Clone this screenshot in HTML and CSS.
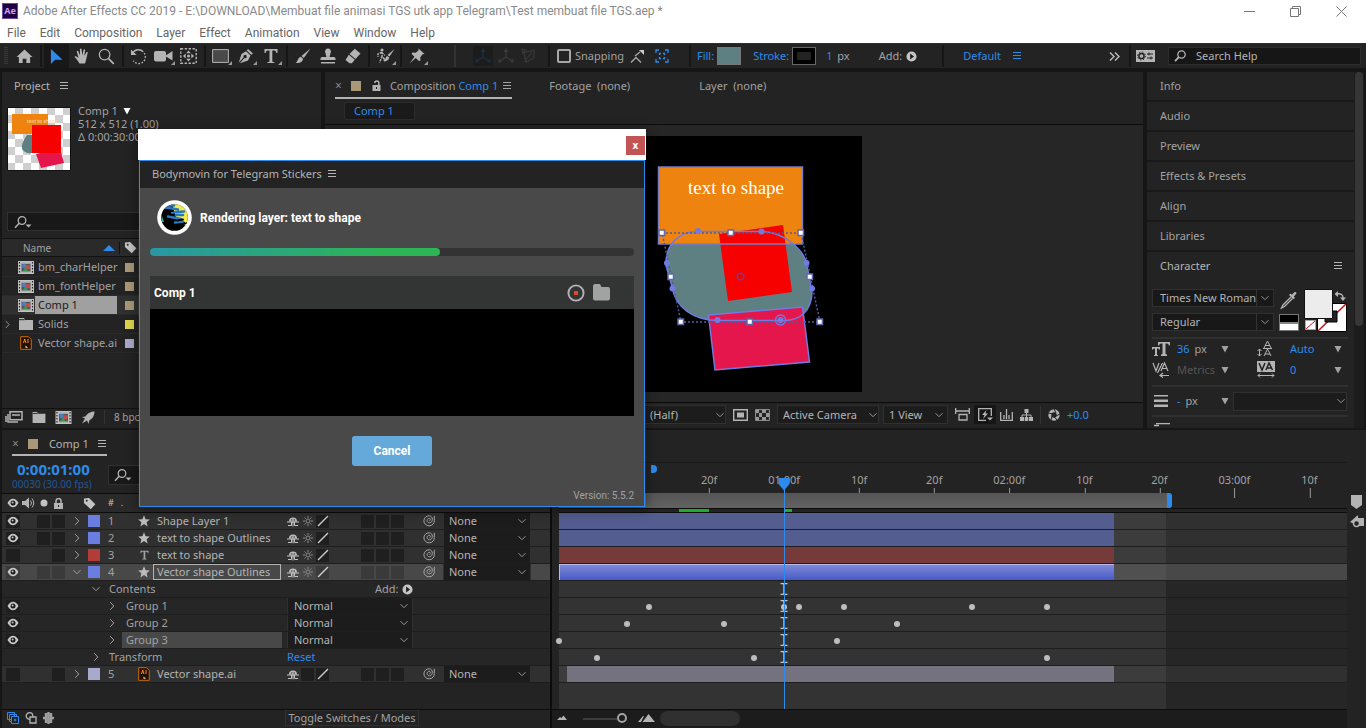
FILE: index.html
```html
<!DOCTYPE html>
<html lang="en">
<head>
<meta charset="utf-8">
<title>Adobe After Effects CC 2019</title>
<link rel="stylesheet" href="styles.css">
</head>
<body>
<svg class="defs" aria-hidden="true">
  <symbol id="i-menu" viewBox="0 0 10 10"><path d="M1 1.500h8M1 4.500h8M1 7.500h8" stroke="currentColor" fill="none"/></symbol>
  <symbol id="i-down" viewBox="0 0 10 10"><path d="M1.500 3.200 5 6.700l3.500-3.500" stroke="currentColor" fill="none"/></symbol>
  <symbol id="i-right" viewBox="0 0 10 10"><path d="M3.200 1.200 6.800 5 3.200 8.800" stroke="currentColor" fill="none"/></symbol>
  <symbol id="i-tri" viewBox="0 0 8 8"><path d="M.500 1h7L4 7.500z" fill="currentColor"/></symbol>
  <symbol id="i-search" viewBox="0 0 18 14"><circle cx="8" cy="5.500" r="3.800" fill="none" stroke="currentColor" stroke-width="1.300"/><path d="M5.200 8.300 1 12.800" stroke="currentColor" stroke-width="1.500"/><path d="M11.500 9.500h6l-3 3z" fill="currentColor"/></symbol>
  <symbol id="i-lens" viewBox="0 0 12 12"><circle cx="7.500" cy="4.500" r="3.700" fill="none" stroke="currentColor" stroke-width="1.300"/><path d="M4.800 7.200 1 11.200" stroke="currentColor" stroke-width="1.800"/></symbol>
  <symbol id="i-play" viewBox="0 0 12 12"><circle cx="6" cy="6" r="5.500" fill="#c4c4c4"/><path d="M4.500 2.800 8.800 6 4.500 9.200z" fill="#1e1e1e"/></symbol>
  <symbol id="i-tag" viewBox="0 0 14 14"><path d="M1 1.500 6.500 1l6.800 6.800-5 5.400L1 6.500z" fill="currentColor"/><circle cx="4" cy="4" r="1.100" fill="#2c2c2c"/></symbol>
  <symbol id="i-comp" viewBox="0 0 16 13"><path fill="#c2c2c2" d="M0 0h16v13H0z"/><path d="M1.500 1v11M14.500 1v11" stroke="#222" stroke-width="1.200" stroke-dasharray="1.600 1.400"/><path fill="#555" d="M3.500 1.800h9v9.400h-9z"/><path fill="#c2c2c2" d="M3.500 1.800h9v1h-9zM3.500 10.500h9v.700h-9z"/><circle cx="6.200" cy="5" r="2.200" fill="#4a7fc9"/><path fill="#c94a4a" d="M8 4.200h4v4H8z"/><path fill="#2f9a55" d="m7.500 6 2.500 4H5z"/></symbol>
  <symbol id="i-folder" viewBox="0 0 14 12"><path fill="#b4b4b4" d="M0 0h5l1 2h8v10H0z"/><path stroke="#262626" d="M0 1.700h5.500"/></symbol>
  <symbol id="i-ai" viewBox="0 0 12 14"><path d="M.700.700h7.800l2.800 2.800v9.800H.700z" fill="#241000" stroke="#c96a10"/><path d="m3.500 7 1.200-4L6 7M8 3v4" stroke="#ff8c1a" fill="none"/><path fill="#eee" d="M5.500 9.500 8 11.800H5.500z"/></symbol>
  <symbol id="i-eye" viewBox="0 0 12 10"><path d="M.500 5Q3 .8 6 .8T11.500 5Q9 9.200 6 9.200T.500 5z" fill="#c8c8c8"/><circle cx="6" cy="5" r="2.500" fill="#1c1c1c"/><circle cx="5.600" cy="4.600" r="1" fill="#c4c4c4"/></symbol>
  <symbol id="i-star" viewBox="0 0 12 12"><path d="m6 .3 1.600 3.900 4.200.3-3.200 2.700 1 4.200L6 9.100l-3.600 2.300 1-4.200L.200 4.500l4.200-.3z" fill="#bdbdbd"/></symbol>
  <symbol id="i-shy" viewBox="0 0 12 11"><path d="M2 5.500a4 4 0 0 1 8 0z" fill="#bdbdbd"/><path d="M0 6h12M6 5v5.500M1 9.500h3.500V6M11 9.500H7.500V6" stroke="#c4c4c4" fill="none"/><path d="M4 4h1.500M6.500 4H8" stroke="#303030"/></symbol>
  <symbol id="i-sun" viewBox="0 0 12 12"><circle cx="6" cy="6" r="2" fill="none" stroke="#8c8c8c"/><path d="M6 1v2M6 9v2M1 6h2M9 6h2M2.500 2.500l1.300 1.300M8.200 8.200l1.300 1.300M9.500 2.500 8.200 3.800M3.800 8.200 2.500 9.500" stroke="#8c8c8c"/></symbol>
  <symbol id="i-slash" viewBox="0 0 12 12"><path d="M1 11 11 1" stroke="#ccc" stroke-width="1.400"/></symbol>
  <symbol id="i-spiral" viewBox="0 0 12 12"><path d="M11.300.800v4.700a5.200 5 0 1 1-5-4.700c4 0 4 6.800.300 7-3.500 0-3-4.500-.4-4.500 1.700.2 1.500 2.300.3 2.300" fill="none" stroke="#a8a8a8"/></symbol>
  <symbol id="i-ibeam" viewBox="0 0 8 12"><path d="M.500.500h2.500l1 1 1-1h2.500M.500 11.500H3l1-1 1 1h2.500M4 1.500v9" fill="none" stroke="#c4c4c4" stroke-width="1.400"/></symbol>
  <symbol id="i-home" viewBox="0 0 18 16"><path d="M9 .5.500 8.500H3V15h4v-4.500h4V15h4V8.500h2.500z" fill="currentColor"/></symbol>
  <symbol id="i-arrow" viewBox="0 0 14 18"><path d="M1 1v16l4.500-4.500h8z" fill="#2d8ceb"/></symbol>
  <symbol id="i-hand" viewBox="0 0 16 16"><path d="M5.500 15.500C4 13 2.500 11 .800 9.300c-.5-.8.8-1.500 1.700-.8l2 1.600L2.800 3.600c0-1 1.200-1.100 1.600-.2L6 7.500 5.900 1.300c.2-1 1.500-1 1.700 0L8.300 7.300l1.300-5.500c.4-.9 1.500-.6 1.500.3l-.7 6 2-3.800c.6-.8 1.600-.3 1.300.6-1.200 4-1.300 6.600-2.700 10.600z" fill="currentColor"/></symbol>
  <symbol id="i-zoom" viewBox="0 0 18 18"><circle cx="7" cy="7" r="5.600" fill="none" stroke="currentColor" stroke-width="1.300"/><path d="m11.200 11.200 5.500 5.500" stroke="currentColor" stroke-width="1.900"/></symbol>
  <symbol id="i-rot" viewBox="0 0 18 18"><path d="M2.500 6A7 7 0 0 1 14 4" fill="none" stroke="currentColor" stroke-width="1.500"/><path d="M15 5.500A7 7 0 1 1 3.500 13.500" fill="none" stroke="currentColor" stroke-width="1.500" stroke-dasharray="1.700 1.700"/><path d="M1 1.500v6h6z" fill="currentColor"/></symbol>
  <symbol id="i-cam" viewBox="0 0 19 12"><rect y="1" width="12" height="10.500" rx="2" fill="currentColor"/><path d="m11 6 7.500-5v9.500z" fill="currentColor"/></symbol>
  <symbol id="i-pan" viewBox="0 0 17 16"><rect x=".8" y=".8" width="15.400" height="14.400" fill="none" stroke="currentColor" stroke-width="1.400" stroke-dasharray="2.400 1.500"/><path d="m8.500 2.500 2.300 2.800H6.200zM8.500 13.500l2.300-2.800H6.200zM3 8l2.700-2.400v4.800zM14 8l-2.700-2.400v4.800z" fill="currentColor"/><circle cx="8.500" cy="8" r="1.500" fill="currentColor"/></symbol>
  <symbol id="i-rect" viewBox="0 0 17 14"><path d="M.600.600h15.800v12.800H.600z" fill="#4a4a4a" stroke="currentColor"/></symbol>
  <symbol id="i-pen" viewBox="0 0 16 16"><path d="m10 1 5 4.500-1.800 1.300L8.800 2.500zM8 3.200 12.500 7.500 10 12.500 1.800 15.200 6.500 10A1.600 1.600 0 1 0 5.700 9.300L.800 14.500 3.500 6z" fill="currentColor"/></symbol>
  <symbol id="i-text" viewBox="0 0 14 16"><path d="M.5 1h13v4h-1.200c-.3-1.600-.8-2.400-2.300-2.400H8.300v10.300c0 .9.500 1.100 2 1.200V15H3.500v-.9c1.500-.1 2-.3 2-1.200V2.600H4C2.500 2.600 2 3.400 1.700 5H.500z" fill="currentColor"/></symbol>
  <symbol id="i-brush" viewBox="0 0 16 16"><path d="M15.500.500 8.800 10 6.500 8zM5.800 8.700l2.300 2C7.700 14.500 3.500 15.500.500 15c2.500-1 2-5.600 5.300-6.300z" fill="currentColor"/></symbol>
  <symbol id="i-stamp" viewBox="0 0 16 16"><path d="M8 .5a3 3 0 0 1 2.700 4.300L9.500 9H14q1.500 0 1.500 1.500V12H.500v-1.500Q.500 9 2 9h4.500L5.300 4.800A3 3 0 0 1 8 .5zM1 14h14v1.500H1z" fill="currentColor"/></symbol>
  <symbol id="i-eraser" viewBox="0 0 16 16"><path d="m9.800.8 5.700 4.700-5 5.500-6-5zM3.800 6.800l6 5-3 3.500H4.500L.500 12z" fill="currentColor"/></symbol>
  <symbol id="i-roto" viewBox="0 0 20 16"><circle cx="7" cy="2" r="1.600" fill="currentColor"/><path d="M6.500 4.500 3 6v3M7 4v5l3 2M7 8.500l-2.500 6M7 5l3 2.500M9 11l1 3" stroke="currentColor" stroke-width="1.500" stroke-dasharray="2 1" fill="none"/><path d="m19.500 1-5 7.500-2-1.500zM12.200 8l2 1.600c-.5 3.200-3 4-5.500 3.600 2-1 1.500-4.500 3.500-5.200z" fill="currentColor"/></symbol>
  <symbol id="i-pin" viewBox="0 0 16 16"><path d="M9.500.500 15.500 6l-2 .3-2.300 3.200.3 3-1.500.5L6.800 9.900.500 15.500l5-6.800L2.500 5.800l1-1.300 3.300.2 2.700-2.500z" fill="currentColor"/></symbol>
  <symbol id="i-axes" viewBox="0 0 18 16"><path d="M9 9V2M9 9l-6 4M9 9l6 4" stroke="currentColor" stroke-width="1.300" fill="none"/><path d="m9 0 2.500 4h-5zM1 14.500l1-4 3 3.500zM17 14.500l-1-4-3 3.500z" fill="currentColor"/></symbol>
  <symbol id="i-plane" viewBox="0 0 16 16"><path d="m3 5 10-3v8L5 14zM3 14l8-10M1 1l4 1-3 3z" fill="none" stroke="currentColor" stroke-width="1.200"/></symbol>
</svg>

<div class="app">
  <header class="titlebar">
    <svg class="ae-logo" viewBox="0 0 16 16"><rect x=".5" y=".5" width="15" height="15" fill="#1f0040" stroke="#6a4a9a"/><text x="8" y="11" text-anchor="middle">Ae</text></svg>
    <h1>Adobe After Effects CC 2019 - E:\DOWNLOAD\Membuat file animasi TGS utk app Telegram\Test membuat file TGS.aep *</h1>
    <div class="winbtns">
      <button aria-label="Minimize"><svg width="11" height="11"><path d="M0 5.500h11" stroke="#777"/></svg></button>
      <button aria-label="Restore"><svg width="11" height="11"><path d="M.500 2.500h8v8h-8zM2.500 2V.500h8v8H9" fill="none" stroke="#777"/></svg></button>
      <button aria-label="Close"><svg width="11" height="11"><path d="m.500.500 10 10m0-10-10 10" stroke="#777"/></svg></button>
    </div>
  </header>
  <nav class="menubar"><button>File</button><button>Edit</button><button>Composition</button><button>Layer</button><button>Effect</button><button>Animation</button><button>View</button><button>Window</button><button>Help</button></nav>

  <div class="toolbar">
    <i class="grip"></i>
    <button class="tool" aria-label="Home"><svg width="17" height="15"><use href="#i-home"/></svg></button>
    <i class="sep"></i>
    <button class="tool on" aria-label="Selection"><svg width="13" height="17"><use href="#i-arrow"/></svg></button>
    <button class="tool" aria-label="Hand"><svg width="16" height="16"><use href="#i-hand"/></svg></button>
    <button class="tool" aria-label="Zoom"><svg width="17" height="17"><use href="#i-zoom"/></svg></button>
    <i class="sep"></i>
    <button class="tool" aria-label="Rotate"><svg width="17" height="17"><use href="#i-rot"/></svg></button>
    <button class="tool more" aria-label="Camera"><svg width="19" height="12"><use href="#i-cam"/></svg></button>
    <button class="tool" aria-label="Pan behind"><svg width="17" height="16"><use href="#i-pan"/></svg></button>
    <i class="sep"></i>
    <button class="tool more" aria-label="Rectangle"><svg width="17" height="14"><use href="#i-rect"/></svg></button>
    <button class="tool more" aria-label="Pen"><svg width="16" height="16"><use href="#i-pen"/></svg></button>
    <button class="tool more" aria-label="Type"><svg width="14" height="16"><use href="#i-text"/></svg></button>
    <i class="sep"></i>
    <button class="tool" aria-label="Brush"><svg width="16" height="16"><use href="#i-brush"/></svg></button>
    <button class="tool" aria-label="Clone stamp"><svg width="16" height="16"><use href="#i-stamp"/></svg></button>
    <button class="tool" aria-label="Eraser"><svg width="16" height="16"><use href="#i-eraser"/></svg></button>
    <i class="sep"></i>
    <button class="tool more" aria-label="Roto brush"><svg width="20" height="16"><use href="#i-roto"/></svg></button>
    <i class="sep"></i>
    <button class="tool more" aria-label="Puppet pin"><svg width="16" height="16"><use href="#i-pin"/></svg></button>
    <i class="sep wide"></i>
    <div class="axes">
      <button aria-label="Local axis" class="axis-on" disabled><svg width="18" height="16"><use href="#i-axes"/></svg></button>
      <button aria-label="World axis" disabled><svg width="18" height="16"><use href="#i-axes"/></svg></button>
      <button aria-label="View axis" disabled><svg width="16" height="16"><use href="#i-plane"/></svg></button>
    </div>
    <i class="sep"></i>
    <label class="snap"><input type="checkbox">Snapping</label>
    <button class="tool" aria-label="Snap edges"><svg width="15" height="15"><path d="m1 13.500 5-5 5 5M5 7l5-4" fill="none" stroke="#aaa" stroke-width="1.300"/><path d="M9 1h5v5z" fill="#ccc"/></svg></button>
    <button class="tool" aria-label="Snap features"><svg width="14" height="14"><path d="M1 4V1h3M10 1h3v3M13 10v3h-3M4 13H1v-3M4.500 6V4.500H6M8 4.500h1.500V6M9.500 8v1.500H8M6 9.500H4.500V8" fill="none" stroke="#2d8ceb" stroke-width="1.300"/></svg></button>
    <i class="sep after-snap"></i>
    <div class="paint">
      <span class="blue">Fill:</span><button class="swatch teal" aria-label="Fill color"></button>
      <span class="blue stroke-label">Stroke:</span><button class="swatch hollow" aria-label="Stroke color"></button>
      <span class="stroke-px"><b class="blue">1</b> px</span>
      <span class="add">Add:</span><svg width="11" height="11"><use href="#i-play"/></svg>
    </div>
    <i class="sep before-ws"></i>
    <button class="workspace-btn">Default <svg width="10" height="10"><use href="#i-menu"/></svg></button>
    <span class="grow"></span>
    <button class="chev2" aria-label="More workspaces"><svg width="11" height="9"><path d="m1 .500 4 4-4 4M6 .500l4 4-4 4" fill="none" stroke="#bbb" stroke-width="1.500"/></svg></button>
    <i class="sep"></i>
    <button class="syncb" aria-label="Sync settings"><svg width="19" height="12"><path fill="#b5b5b5" d="M0 0h19v12H0z"/><circle cx="5.500" cy="6" r="2.600" fill="none" stroke="#222" stroke-width="1.500"/><circle cx="5.500" cy="6" r="4" fill="none" stroke="#222" stroke-dasharray="1.400 1.740"/><path d="M11 4h6M11 8h6M13 2.500v3M15 6.500v3" stroke="#222"/></svg></button>
    <label class="help"><svg width="12" height="12"><use href="#i-lens"/></svg><input type="text" placeholder="Search Help" aria-label="Search Help"></label>
  </div>

  <main class="workspace">
    <section class="panel project">
      <div class="tabs"><span class="tab-title">Project</span><svg width="10" height="10"><use href="#i-menu"/></svg></div>
      <div class="info">
        <svg class="thumb" width="64" height="64" viewBox="0 0 64 64"><defs><pattern id="chk" width="16" height="16" patternUnits="userSpaceOnUse"><path fill="#fff" d="M0 0h16v16H0z"/><path fill="#cfcfcf" d="M8 0h8v8H8zM0 8h8v8H0z"/></pattern></defs><path fill="url(#chk)" stroke="#111" d="M.500.500h63v63H.500z"/><path fill="#ee830f" d="M5 7h36v20H5z"/><path fill="#5e8083" d="M20 28q-6 8-5 14 3 5 10 4h5V28z"/><path fill="#e5164b" d="m29 47 24-5 4 14-23 5z"/><path fill="#f60000" d="M25 18h29v28H25z"/><text x="20" y="16">text to shape</text></svg>
        <div class="facts"><p>Comp 1 <svg width="8" height="8"><use href="#i-tri"/></svg></p><p>512 x 512 (1.00)</p><p>Δ 0:00:30:00</p></div>
      </div>
      <div class="search"><svg width="18" height="14"><use href="#i-search"/></svg></div>
      <div class="cols"><span>Name</span><svg width="12" height="6"><path d="M0 6h12L6 0z" fill="#2d8ceb"/></svg><i></i><svg width="13" height="13"><use href="#i-tag"/></svg></div>
      <ul class="items">
        <li><i></i><svg width="16" height="13"><use href="#i-comp"/></svg><span>bm_charHelper</span><b class="tan"></b></li>
        <li><i></i><svg width="16" height="13"><use href="#i-comp"/></svg><span>bm_fontHelper</span><b class="tan"></b></li>
        <li class="sel"><i></i><svg width="16" height="13"><use href="#i-comp"/></svg><span>Comp 1</span><b class="tan"></b></li>
        <li><i><svg width="9" height="9"><use href="#i-right"/></svg></i><svg width="14" height="12"><use href="#i-folder"/></svg><span>Solids</span><b class="yellow"></b></li>
        <li><i></i><svg width="12" height="14"><use href="#i-ai"/></svg><span>Vector shape.ai</span><b class="lav"></b></li>
      </ul>
      <footer class="foot">
        <svg width="18" height="12"><path d="M5 .700h12v8H5zM7 4h8M3 3v8h10M1 5v6" fill="none" stroke="#b4b4b4" stroke-width="1.500"/></svg>
        <svg width="14" height="11"><use href="#i-folder"/></svg>
        <svg width="17" height="13"><use href="#i-comp"/></svg>
        <svg width="14" height="13"><path d="M13.500.500C9 .5 6 3 4.500 5.500L1 6l3 1.500-3 5 5-3L7.500 13l.8-3.500C11 8 13.500 5 13.500.500z" fill="#b4b4b4"/></svg>
        <span>8 bpc</span>
      </footer>
    </section>

    <section class="panel viewer">
      <div class="tabs">
        <div class="tab active"><span class="x">×</span><b class="tan"></b><svg width="9" height="12"><path d="M.500 5h8v6h-8z" fill="#b4b4b4"/><path d="M6.800 5V3a2 2 0 0 0-4 0" fill="none" stroke="#b4b4b4" stroke-width="1.500"/><path d="M4.500 7v2" stroke="#222"/></svg><span class="comp-name">Composition <em>Comp 1</em></span><svg class="m" width="10" height="10"><use href="#i-menu"/></svg></div>
        <span class="tab foo">Footage&nbsp; (none)</span>
        <span class="tab lay">Layer&nbsp; (none)</span>
      </div>
      <div class="crumbs"><button>Comp 1</button></div>
      <div class="stage">
        <svg class="canvas" width="256" height="256" viewBox="606 136 256 256">
          <path fill="#000" d="M606 136h256v256H606z"/>
          <path fill="#5e8083" d="M698 231.500h62c26 0 45 20 47 34l5 26c0 20-13 29-27 29h-67c-24 0-43-13-46-34l-6-21c-1-20 12-34 32-34z"/>
          <path fill="#ee830f" d="M658 167h144v77H658z"/>
          <text x="736" y="194" text-anchor="middle">text to shape</text>
          <path fill="#f60000" d="m719 234 64-9 9 67-64 9z"/>
          <path fill="#e5164b" stroke="#6f7be0" stroke-width="1.500" d="m708.500 315 94-8 7 55-94.500 8z"/>
          <g fill="none" stroke="#7b7cc4" stroke-width="1.500"><path d="M658.500 167h144v77h-144z"/><path stroke="#6f7be0" d="M698 231.500h62c26 0 45 20 47 34l5 26c0 20-13 29-27 29h-67c-24 0-43-13-46-34l-6-21c-1-20 12-34 32-34z"/><path stroke="#5159a0" stroke-dasharray="2 2" d="M662 233h139l19 89H681z"/></g>
          <g fill="#6f7be0"><circle cx="698" cy="231" r="3"/><circle cx="761.500" cy="231.500" r="3"/><circle cx="806.500" cy="263" r="3"/><circle cx="812" cy="288.500" r="3"/><circle cx="717.500" cy="320" r="3"/><circle cx="667" cy="263" r="3"/><circle cx="672.500" cy="288.500" r="3"/><circle cx="780.500" cy="320" r="3"/></g>
          <circle cx="780.500" cy="320" r="5" fill="none" stroke="#6f7be0" stroke-width="1.300"/>
          <circle cx="740.500" cy="276.500" r="3.300" fill="none" stroke="#7a3a90" stroke-width="1.500"/>
          <g fill="#fff" stroke="#6068a8" stroke-width="1.500"><path d="M659 230h5.500v5.500H659zM728 230h5.500v5.500H728zM798 230h5.500v5.500H798zM668 274h5.500v5.500H668zM807 274h5.500v5.500H807zM678 319h5.500v5.500H678zM747 319h5.500v5.500H747zM817 319h5.500v5.500H817z"/></g>
        </svg>
      </div>
      <div class="viewbar">
        <div class="select half"><select aria-label="Resolution"><option>(Half)</option></select><svg width="10" height="10"><use href="#i-down"/></svg></div>
        <svg width="15" height="12"><path d="M.700.700h13.600v10.600H.700z" fill="none" stroke="#b4b4b4" stroke-width="1.400"/><path d="M4 3.500h7v5H4z" fill="#b4b4b4"/></svg>
        <svg width="15" height="12"><path d="M.600.600h13.800v10.800H.600z" fill="none" stroke="#999"/><path d="M1 1h3v3H1zM7 1h4v3H7zM4 4h3v4H4zM11 4h3v4h-3zM1 8h3v3H1zM7 8h4v3H7z" fill="#999"/></svg>
        <div class="select"><select aria-label="3D view"><option>Active Camera</option></select><svg width="10" height="10"><use href="#i-down"/></svg></div>
        <div class="select views"><select aria-label="View layout"><option>1 View</option></select><svg width="10" height="10"><use href="#i-down"/></svg></div>
        <svg width="15" height="13"><path d="M.700 0v6M14.300 0v6M1 3h13M4 6.500h8v5.500H4z" fill="none" stroke="#b4b4b4" stroke-width="1.300"/></svg>
        <svg class="boxed" width="22" height="19" viewBox="-4 -3 22 19"><path d="M8 12.300H.700V.700h12.600V8" fill="none" stroke="#b4b4b4" stroke-width="1.300"/><path d="M8.500 2 4 7h2.500L5 11l5-5.500H7.500zM9 9.500h6l-3 3z" fill="#b4b4b4"/></svg>
        <svg width="13" height="12"><path d="M.700 3v8.300h11.600V3M4 6v4M9 6v4M6.500 0v10" fill="none" stroke="#b4b4b4" stroke-width="1.300"/></svg>
        <svg width="13" height="12"><path d="M4.500 0h4v4h-4zM0 8h4v4H0zM4.700 8h3.600v4H4.700zM9 8h4v4H9z" fill="#b4b4b4"/><path d="M2 8V6h9v2M6.500 3v5" fill="none" stroke="#b4b4b4"/></svg>
        <i></i>
        <svg width="12" height="12"><circle cx="6" cy="6" r="4.200" fill="none" stroke="#b4b4b4" stroke-width="3"/><path d="m6 0 2 4M12 5 8 7M9 11 6.500 8M3 11l1-4M0 4l5 1" stroke="#222"/></svg>
        <span class="blue">+0.0</span>
      </div>
    </section>

    <aside class="panel side">
      <div class="stack">
        <h2>Info</h2><h2>Audio</h2><h2>Preview</h2><h2>Effects &amp; Presets</h2><h2>Align</h2><h2>Libraries</h2>
        <div class="char-head">Character<svg width="10" height="10"><use href="#i-menu"/></svg></div>
        <div class="char">
          <div class="fonts">
            <div>
              <div class="select split"><select aria-label="Font family"><option>Times New Roman</option></select><svg width="10" height="10"><use href="#i-down"/></svg></div>
              <div class="select split"><select aria-label="Font style"><option>Regular</option></select><svg width="10" height="10"><use href="#i-down"/></svg></div>
            </div>
            <svg width="69" height="44" viewBox="1279 288 69 44"><path d="m1291 296-8 8-1.500 3 3-1.500 8-8" fill="none" stroke="#b4b4b4" stroke-width="1.300"/><path d="m1289 294 1.500-1.500 1.200 1.200 3-2.700q2-.5 1.800 1.500l-2.700 3 1.200 1.200-1.500 1.500z" fill="#b4b4b4"/><path d="M1279.500 313.500h19v16h-19z" fill="#fff" stroke="#777"/><path fill="#000" d="M1280 314h18v7.500h-18z"/><path fill="#888" d="M1280 321.500h18v1.500h-18z"/><path d="M1317.500 302.500h29v28h-29z" fill="#fff" stroke="#000"/><path d="m1318 330 28-27" stroke="#c01818" stroke-width="1.600"/><path d="M1325 310h12v11h-12z" fill="#232323" stroke="#000"/><path d="M1304.500 288.500h28v29h-28z" fill="#ececec" stroke="#111"/><path d="M1305.500 319.500h10v9h-10z" fill="#fff" stroke="#aaa"/><path d="m1306 328 9-8" stroke="#c01818"/><path d="M1337 293q6-1 6 4" fill="none" stroke="#b4b4b4" stroke-width="1.500"/><path d="M1338 290v6l-3.500-3zM1340 296.500h6l-3 3.500z" fill="#b4b4b4"/></svg>
          </div>
          <div class="metrics">
            <svg width="18" height="16"><path d="M6 1h12v3.500h-1Q16.500 2.500 15 2.500h-1.500V13l1.500.500V15H9v-1.500l1.500-.500V2.500H9Q7.500 2.500 7 4.500H6zM0 6h8v2.500H7L6.500 7.500H5V14h1v1H2v-1h1V7.500H1.500L1 8.500H0z" fill="#b4b4b4"/></svg><span><b>36</b> px</span><svg width="8" height="8"><use href="#i-tri"/></svg>
            <svg width="16" height="17"><path d="M7 8 10.500 1 14 8M8 5.500h5M7 16l3.500-7L14 16M8 14h5M6 8.500h9M2.500 9v7M.500 11l2-2 2 2M.500 14l2 2 2-2" fill="none" stroke="#b4b4b4"/></svg><span><b>Auto</b></span><svg width="8" height="8"><use href="#i-tri"/></svg>
            <svg width="18" height="17"><path d="m1 2 3 8 3-8M10.500 2l-5 10M9 10l3.500-8L16 10M10 7.500h5M8 14.500h9M11 12l-3 2.500 3 2" fill="none" stroke="#b4b4b4" stroke-width="1.200"/></svg><span class="dim">Metrics</span><svg width="8" height="8"><use href="#i-tri"/></svg>
            <svg width="18" height="17"><path fill="#b4b4b4" d="M0 0h18v11H0z"/><path d="m2 2 3 7 3-7M9 9l3-7 3.500 7M10 7h5" fill="none" stroke="#222" stroke-width="1.500"/><path d="M1 14.500h16M3 12.500l-2 2 2 2M15 12.500l2 2-2 2" fill="none" stroke="#b4b4b4"/></svg><span><b>0</b></span><svg width="8" height="8"><use href="#i-tri"/></svg>
          </div>
          <div class="strokes">
            <svg width="14" height="12"><path fill="#b4b4b4" d="M0 0h14v1.500H0zM0 4.500h14V7H0zM0 9.500h14v2.500H0z"/></svg><span><b>-</b> px</span><svg width="8" height="8"><use href="#i-tri"/></svg>
            <div class="select wide"><select aria-label="Stroke order"><option></option></select><svg width="10" height="10"><use href="#i-down"/></svg></div>
          </div>
          <svg class="cut" width="18" height="8"><path d="M4 .700h14M2 2.500h5" stroke="#b4b4b4" stroke-width="1.300"/></svg>
        </div>
      </div>
      <i class="scroll"></i>
    </aside>
  </main>

  <section class="timeline">
    <div class="tl-left">
      <div class="tl-tabs"><div class="tab active"><span class="x">×</span><b class="tan"></b><span>Comp 1</span><svg width="10" height="10"><use href="#i-menu"/></svg></div></div>
      <div class="tc"><div><strong>0:00:01:00</strong><small>00030 (30.00 fps)</small></div><div class="tc-search"><svg width="18" height="14"><use href="#i-search"/></svg></div></div>
      <div class="tl-head row">
        <svg width="12" height="10"><use href="#i-eye"/></svg>
        <svg width="13" height="12"><path d="M0 4h3l4-3.500v11L3 8H0z" fill="#b4b4b4"/><path d="M8.500 3.500q2 2.500 0 5M10 1.500q3.500 4.500 0 9" fill="none" stroke="#b4b4b4"/></svg>
        <svg width="8" height="8"><circle cx="4" cy="4" r="3.500" fill="#c4c4c4"/></svg>
        <svg width="9" height="11"><path d="M0 5h9v6H0z" fill="#b4b4b4"/><path d="M2 5V3a2.500 2.500 0 0 1 5 0v2" fill="none" stroke="#b4b4b4" stroke-width="1.500"/><path d="M4.500 7v2" stroke="#222"/></svg>
        <svg class="tag-col" width="13" height="13"><use href="#i-tag"/></svg><span class="num">#&nbsp;&nbsp; .</span>
      </div>

      <div class="row layer"><span class="c"><svg width="12" height="10"><use href="#i-eye"/></svg></span><i></i><span class="c"></span><span class="c"></span><svg width="10" height="10"><use href="#i-right"/></svg><b class="indigo"></b><span>1</span><svg width="12" height="12"><use href="#i-star"/></svg><span class="name">Shape Layer 1</span><svg width="12" height="11"><use href="#i-shy"/></svg><svg width="12" height="12"><use href="#i-sun"/></svg><span class="c"><svg width="12" height="12"><use href="#i-slash"/></svg></span><i></i><span class="c"></span><span class="c"></span><span class="c"></span><i></i><svg width="12" height="12"><use href="#i-spiral"/></svg><i></i><div class="select"><select aria-label="Parent of layer 1"><option>None</option></select><svg width="10" height="10"><use href="#i-down"/></svg></div></div>
      <div class="row layer"><span class="c"><svg width="12" height="10"><use href="#i-eye"/></svg></span><i></i><span class="c"></span><span class="c"></span><svg width="10" height="10"><use href="#i-right"/></svg><b class="indigo"></b><span>2</span><svg width="12" height="12"><use href="#i-star"/></svg><span class="name">text to shape Outlines</span><svg width="12" height="11"><use href="#i-shy"/></svg><svg width="12" height="12"><use href="#i-sun"/></svg><span class="c"><svg width="12" height="12"><use href="#i-slash"/></svg></span><i></i><span class="c"></span><span class="c"></span><span class="c"></span><i></i><svg width="12" height="12"><use href="#i-spiral"/></svg><i></i><div class="select"><select aria-label="Parent of layer 2"><option>None</option></select><svg width="10" height="10"><use href="#i-down"/></svg></div></div>
      <div class="row layer"><span class="c"></span><i></i><i></i><span class="c"></span><svg width="10" height="10"><use href="#i-right"/></svg><b class="brick"></b><span>3</span><svg width="9" height="10" viewBox="0 0 14 16"><use href="#i-text"/></svg><span class="name">text to shape</span><svg width="12" height="11"><use href="#i-shy"/></svg><svg width="12" height="12"><use href="#i-sun"/></svg><span class="c"><svg width="12" height="12"><use href="#i-slash"/></svg></span><i></i><span class="c"></span><span class="c"></span><span class="c"></span><i></i><svg width="12" height="12"><use href="#i-spiral"/></svg><i></i><div class="select"><select aria-label="Parent of layer 3"><option>None</option></select><svg width="10" height="10"><use href="#i-down"/></svg></div></div>
      <div class="row layer sel"><span class="c"><svg width="12" height="10"><use href="#i-eye"/></svg></span><i></i><span class="c"></span><span class="c"></span><svg width="10" height="10"><use href="#i-down"/></svg><b class="indigo"></b><span>4</span><svg width="12" height="12"><use href="#i-star"/></svg><span class="name boxed-name">Vector shape Outlines</span><svg width="12" height="11"><use href="#i-shy"/></svg><svg width="12" height="12"><use href="#i-sun"/></svg><span class="c"><svg width="12" height="12"><use href="#i-slash"/></svg></span><i></i><span class="c"></span><span class="c"></span><span class="c"></span><i></i><svg width="12" height="12"><use href="#i-spiral"/></svg><i></i><div class="select"><select aria-label="Parent of layer 4"><option>None</option></select><svg width="10" height="10"><use href="#i-down"/></svg></div></div>
      <div class="row prop"><span class="eye"></span><span class="twist"><svg width="10" height="10"><use href="#i-down"/></svg></span><span class="pname">Contents</span><span class="addc">Add: <svg width="11" height="11"><use href="#i-play"/></svg></span></div>
      <div class="row prop group"><span class="eye c"><svg width="12" height="10"><use href="#i-eye"/></svg></span><span class="twist"><svg width="10" height="10"><use href="#i-right"/></svg></span><span class="pname">Group 1</span><div class="select mode"><select aria-label="Group 1 mode"><option>Normal</option></select><svg width="10" height="10"><use href="#i-down"/></svg></div></div>
      <div class="row prop group"><span class="eye c"><svg width="12" height="10"><use href="#i-eye"/></svg></span><span class="twist"><svg width="10" height="10"><use href="#i-right"/></svg></span><span class="pname">Group 2</span><div class="select mode"><select aria-label="Group 2 mode"><option>Normal</option></select><svg width="10" height="10"><use href="#i-down"/></svg></div></div>
      <div class="row prop group"><span class="eye c"><svg width="12" height="10"><use href="#i-eye"/></svg></span><span class="twist"><svg width="10" height="10"><use href="#i-right"/></svg></span><span class="pname hl">Group 3</span><div class="select mode"><select aria-label="Group 3 mode"><option>Normal</option></select><svg width="10" height="10"><use href="#i-down"/></svg></div></div>
      <div class="row prop"><span class="eye"></span><span class="twist"><svg width="10" height="10"><use href="#i-right"/></svg></span><span class="pname">Transform</span><button class="reset">Reset</button></div>
      <div class="row layer"><span class="c"></span><i></i><i></i><span class="c"></span><svg width="10" height="10"><use href="#i-right"/></svg><b class="lav"></b><span>5</span><svg width="12" height="14"><use href="#i-ai"/></svg><span class="name">Vector shape.ai</span><svg width="12" height="11"><use href="#i-shy"/></svg><span class="c"></span><span class="c"><svg width="12" height="12"><use href="#i-slash"/></svg></span><i></i><span class="c"></span><span class="c"></span><span class="c"></span><i></i><svg width="12" height="12"><use href="#i-spiral"/></svg><i></i><div class="select"><select aria-label="Parent of layer 5"><option>None</option></select><svg width="10" height="10"><use href="#i-down"/></svg></div></div>
      <footer class="tl-foot">
        <svg width="12" height="12"><path d="M.500.500h7v7h-7zM2.500 2.500h7v7h-7z" fill="none" stroke="#2d8ceb"/><path d="M4.500 4.500h7v7h-7zM8 6.500v3M6.500 8h3" fill="#1c1c1c" stroke="#2d8ceb"/></svg>
        <svg width="12" height="12"><circle cx="4.500" cy="4" r="3.300" fill="none" stroke="#b4b4b4" stroke-width="1.300"/><path d="M5 5h6v6H5z" fill="#222" stroke="#b4b4b4" stroke-width="1.300"/></svg>
        <svg width="11" height="12"><path d="M3 1v10M5.500 0v12M8 1v10M0 6h3M8 6h3" stroke="#a0a0a0" stroke-width="2.400"/></svg>
        <button>Toggle Switches / Modes</button>
      </footer>
    </div>

    <div class="tl-right">
      <div class="tl-gap"></div>
      <div class="ruler scale">
        <i class="nav-end" style="--f:13"></i>
        <span style="--f:20">20f</span><span style="--f:30">01:00f</span><span style="--f:40">10f</span><span style="--f:50">20f</span><span style="--f:60">02:00f</span><span style="--f:70">10f</span><span style="--f:80">20f</span><span style="--f:90" class="long">03:00f</span><span style="--f:100" class="long">10f</span>
      </div>
      <div class="work scale"><i style="--f:0;--n:81"></i></div>
      <div class="cache scale"><i style="--f:16;--n:4"></i><i style="--f:30;--n:1"></i></div>
      <div class="tracks">
        <div class="track scale lit"><i class="bar indigo" style="--f:0;--n:74"></i></div>
        <div class="track scale lit"><i class="bar indigo" style="--f:0;--n:74"></i></div>
        <div class="track scale lit"><i class="bar brick" style="--f:0;--n:74"></i></div>
        <div class="track scale lit sel"><i class="bar bright" style="--f:0;--n:74"></i></div>
        <div class="track scale"><svg style="--f:30"><use href="#i-ibeam"/></svg></div>
        <div class="track scale"><svg style="--f:30"><use href="#i-ibeam"/></svg><u style="--f:12"></u><u style="--f:30"></u><u style="--f:32"></u><u style="--f:38"></u><u style="--f:55"></u><u style="--f:65"></u></div>
        <div class="track scale"><svg style="--f:30"><use href="#i-ibeam"/></svg><u style="--f:9"></u><u style="--f:22"></u><u style="--f:45"></u></div>
        <div class="track scale"><svg style="--f:30"><use href="#i-ibeam"/></svg><u style="--f:0"></u><u style="--f:37"></u></div>
        <div class="track scale"><svg style="--f:30"><use href="#i-ibeam"/></svg><u style="--f:5"></u><u style="--f:26"></u><u style="--f:65"></u></div>
        <div class="track scale lit"><i class="bar dusk" style="--f:1;--n:73"></i></div>
        <div class="track rest scale"></div>
      </div>
      <div class="playhead scale"><svg style="--f:30" width="12" height="14"><path d="M.500 1h11v6L6 13.500.500 7z" fill="#2d8ceb"/></svg><i style="--f:30"></i></div>
      <footer class="zoombar">
        <svg width="10" height="6"><path d="m0 5 3-3 1.500 1L6.500.500 10 5z" fill="#b4b4b4"/></svg>
        <input type="range" min="0" max="100" value="100" aria-label="Timeline zoom">
        <svg width="17" height="9"><path d="m0 8 5-6h1L3 8zM4.500 8l6-8L17 8z" fill="#b4b4b4"/></svg>
        <i></i>
      </footer>
    </div>
    <div class="tl-strip">
      <svg width="11" height="14"><path d="M0 0h11v10l-5.500 4L0 10z" fill="#b4b4b4"/></svg>
      <svg width="14" height="13"><path d="M0 7 8 0v3h6v8H9z" fill="#b4b4b4"/><circle cx="6.500" cy="8.500" r="3" fill="#232323" stroke="#b4b4b4" stroke-width="1.500"/></svg>
    </div>
  </section>

  <div class="dialog" role="dialog" aria-label="Bodymovin for Telegram Stickers">
    <div class="dlg-bar"><button aria-label="Close dialog">x</button></div>
    <div class="dlg-frame">
      <div class="dlg-tab">Bodymovin for Telegram Stickers<svg width="10" height="10"><use href="#i-menu"/></svg></div>
      <div class="dlg-body">
        <div class="status">
          <svg width="35" height="35"><circle cx="17.500" cy="17.500" r="17.300" fill="#fff"/><clipPath id="orb"><circle cx="17.500" cy="17.500" r="13.300"/></clipPath><g clip-path="url(#orb)"><path d="M0 0h35v35H0z"/><path d="m15 3 17 2v20h-5l1-3-8-2-3-9z" fill="#f3ec47"/><g stroke="#2779c4" stroke-width="2.600" stroke-linecap="round"><path d="m8 7.500 13 2M15 12.500l12-1M11 16.500l13 2.500M19 15h7M18 22.500l8-1M12 5.500h5"/></g><g stroke="#000" stroke-width="1.800" stroke-linecap="round"><path d="m7 10 9 1M20 20.500l6-1M24 25l6-2"/></g><path d="m4 22 1-6 2 6z" fill="#2bb67a"/></g></svg>
          <p>Rendering layer: text to shape</p>
        </div>
        <div class="progress"><i style="width:60%"></i></div>
        <div class="render">
          <div class="render-head"><span>Comp 1</span><svg width="18" height="18"><circle cx="9" cy="9" r="7.600" fill="none" stroke="#b4b4b4" stroke-width="1.900"/><path d="M7 7h4v4H7z" fill="#e3472e"/></svg><svg width="17" height="17"><path d="M0 2q0-2 2-2h5l1.500 3H15q2 0 2 2v9.500q0 2-2 2H2q-2 0-2-2z" fill="#a2a2a2"/></svg></div>
          <div class="render-list"></div>
        </div>
        <button class="cancel">Cancel</button>
        <p class="version">Version: 5.5.2</p>
      </div>
    </div>
  </div>
</div>
</body>
</html>
```
FILE: styles.css
```css
* { box-sizing: border-box; }
body, h1, h2, p, ul { margin: 0; padding: 0; }
body { background: #161616; color: #a2a2a2; font: 11px/14px "Noto Sans", "Open Sans", sans-serif; }
button, select, input { font: inherit; color: inherit; margin: 0; padding: 0; border: 0; background: none; border-radius: 0; }
svg { display: block; flex: none; }
ul { list-style: none; }
i, u, em { font-style: normal; text-decoration: none; }
.defs { position: absolute; width: 0; height: 0; }
.app { position: relative; display: flex; flex-direction: column; height: 100vh; overflow: hidden; }
.blue { color: #2d8ceb; font-weight: 400; }
.grow { flex: 1; }

.tan { background: #a99877; }
.yellow { background: #ddd64c; }
.lav { background: #a9a8cd; }
.indigo { background: #6a7de0; }
.brick { background: #b23c3a; }

/* Window chrome */
.titlebar { display: flex; align-items: center; height: 22px; padding: 0 2px; background: #fff; color: #8a8a8a; flex: none; }
.titlebar h1 { margin-left: 5px; font: 12px/22px Roboto, sans-serif; white-space: nowrap; flex: 1; }
.ae-logo { width: 16px; height: 16px; }
.ae-logo text { font: bold 9px "Noto Sans", sans-serif; fill: #c9a0ff; }
.winbtns { display: flex; height: 22px; }
.winbtns button { width: 46px; display: grid; place-items: center; }
.menubar { display: flex; gap: 14px; height: 21px; padding-left: 7px; background: #fff; color: #666; font-family: Roboto, sans-serif; font-size: 12px; flex: none; }

/* Tools */
.toolbar { display: flex; align-items: center; height: 25px; margin-bottom: 4px; background: #232323; color: #b4b4b4; flex: none; border-top: 1px solid #2e2e2e; }
.grip { width: 4px; height: 18px; margin: 0 4px; background: repeating-linear-gradient(#3a3a3a 0 1px, #232323 1px 2px); }
.tool { position: relative; width: 25px; height: 24px; display: grid; place-items: center; flex: none; }
.on { background: #181818; }
.more::after { content: ""; position: absolute; right: 1px; bottom: 3px; border: 2px solid transparent; border-right-color: #999; border-bottom-color: #999; }
.sep { width: 7px; height: 22px; flex: none; background: linear-gradient(#161616, #161616) 3px 0 / 2px 100% no-repeat; }
.sep.wide { width: 24px; margin-left: 5px; background-position: 20px 0; background-image: linear-gradient(#333, #333); }
.axes { display: flex; gap: 3px; margin: 0 6px 0 15px; color: #3a3a3a; }
.axes button { width: 20px; height: 20px; display: grid; place-items: center; }
.axes .axis-on { background: #1c1c1c; color: #1b3048; }
.snap { display: flex; align-items: center; gap: 4px; margin: 0 1px 0 5px; color: #a2a2a2; }
.snap input { appearance: none; width: 14px; height: 14px; border: 2px solid #a8a8a8; border-radius: 2px; }
.after-snap { margin-left: 11px; }
.paint { display: flex; align-items: center; margin-left: 4px; color: #a2a2a2; }
.swatch { width: 24px; height: 18px; margin-left: 3px; border: 1px solid #777; }
.teal { background: #5e8083; }
.hollow { background: #232323; border: 5px solid #000; outline: 1px solid #666; outline-offset: -1px; }
.stroke-label { margin-left: 12px; }
.stroke-px { margin: 0 29px 0 10px; }
.stroke-px b { margin-right: 2px; }
.add { margin-right: 4px; }
.before-ws { margin-left: 22px; }
.workspace-btn { display: flex; align-items: center; gap: 11px; margin-left: 17px; color: #2d8ceb; }
.chev2 { margin-right: 6px; }
.syncb { margin: 0 13px 0 3px; }
.help { display: flex; align-items: center; gap: 10px; width: 193px; height: 18px; margin-right: 5px; padding-left: 5px; background: #161616; border: 1px solid #2c2c2c; }
.help input { width: 150px; }
.help input::placeholder { color: #b4b4b4; }

/* Panels */
.workspace { display: grid; grid-template-columns: 319px minmax(0, 1fr) 217px; gap: 4px; padding: 0 2px; flex: none; margin-bottom: 2px; }
.panel { background: #232323; min-width: 0; }
.tabs { display: flex; align-items: center; height: 27px; flex: none; }
.x { font-size: 12px; color: #888; }
.active { box-shadow: 0 2px 0 #b4b4b4; }
.select { display: grid; align-items: center; color: #b4b4b4; background: #1c1c1c; border: 1px solid #303030; }
.select select, .select svg { grid-area: 1 / 1; }
.select select { appearance: none; width: 100%; outline: 0; }
.select svg { justify-self: end; pointer-events: none; color: #999; }

.project { display: flex; flex-direction: column; }
.project .tabs { padding-left: 12px; gap: 9px; color: #b4b4b4; }
.info { display: flex; gap: 7px; padding: 5px; height: 113px; }
.thumb { margin-top: 3px; }
.thumb text { font-size: 5px; fill: #fbd9a8; }
.facts p { display: flex; align-items: center; gap: 5px; height: 13px; line-height: 13px; white-space: nowrap; }
.facts p svg { color: #fff; }
.search { display: flex; align-items: center; height: 19px; margin: 0 5px 7px; padding-left: 6px; background: #181818; border: 1px solid #303030; color: #b4b4b4; }
.cols { display: flex; align-items: center; height: 19px; padding-left: 21px; background: #2a2a2a; border-block: 1px solid #111; font-size: 10px; }
.cols span { width: 80px; }
.cols i { width: 1px; height: 12px; margin: 0 4px; background: #111; }
.cols svg:last-child { color: #c4c4c4; }
.items { margin-top: 1px; }
.items li { display: grid; grid-template-columns: 16px 16px 83px 9px; align-items: center; height: 19px; border-bottom: 1px solid #2a2a2a; }
.items li > svg { justify-self: center; }
.items i svg { margin-left: 1px; }
.items span { padding-left: 3px; margin-left: 1px; line-height: 18px; white-space: nowrap; }
.items b { width: 9px; height: 9px; margin-left: 8px; }
.items .sel { background: #303030; }
.items .sel span { background: #a0a0a0; color: #1c1c1c; }
.foot { display: flex; align-items: center; gap: 9px; height: 20px; margin-top: auto; padding: 0 0 3px 3px; border-top: 1px solid #111; font-size: 10px; }
.foot span { padding-left: 9px; border-left: 1px solid #333; }

.viewer { display: flex; flex-direction: column; }
.viewer .tabs { padding-left: 10px; height: 25px; padding-top: 3px; }
.viewer .tab { display: flex; align-items: center; height: 22px; }
.tab b { width: 10px; height: 10px; margin: 0 11px 0 9px; }
.comp-name { margin: 0 4px 0 9px; }
.comp-name em { color: #2d8ceb; }
.foo { margin-left: 37px; }
.lay { margin-left: 69px; }
.crumbs { height: 28px; padding: 5px 19px; border-bottom: 1px solid #0c0c0c; }
.crumbs button { width: 71px; height: 18px; padding-left: 9px; text-align: left; color: #2d8ceb; background: #1a1a1a; border: 1px solid #2c2c2c; border-radius: 2px; }
.stage { display: grid; justify-content: center; padding: 11px 0 10px; background: #262626; }
.canvas text { font: 19px "Liberation Serif", serif; fill: #fff; }
.viewbar { display: flex; align-items: center; gap: 7px; height: 26px; padding: 0 0 2px 319px; border-top: 1px solid #0c0c0c; color: #b4b4b4; white-space: nowrap; }
.viewbar .select { height: 19px; }
.viewbar .select select { padding: 0 21px 0 5px; }
.viewbar .half { width: 82px; }
.viewbar .views { margin-left: -3px; padding-right: 3px; }
.viewbar i { width: 1px; height: 18px; background: #333; }
.viewbar .boxed { background: #161616; margin: 0 -3px; }

.side { display: grid; grid-template-columns: 207px 1fr; height: 356px; overflow: hidden; background: #1c1c1c; }
.stack { background: #232323; overflow: hidden; }
.stack h2 { height: 30px; padding-left: 13px; font: 11px/28px "Noto Sans", sans-serif; border-bottom: 2px solid #191919; }
.char-head { display: flex; justify-content: space-between; align-items: center; height: 28px; padding: 0 11px 0 13px; color: #b4b4b4; }
.char { padding: 9px 6px 0 5px; }
.fonts { display: flex; justify-content: space-between; height: 50px; border-bottom: 2px solid #303030; }
.split { width: 122px; height: 18px; margin-bottom: 6px; background: linear-gradient(#333, #333) 103px 0 / 1px 100% no-repeat #181818; }
.split select { padding-left: 7px; }
.split svg { margin-right: 3px; }
.metrics { display: grid; grid-template-columns: 25px 44px 36px 33px 44px 8px; row-gap: 4px; align-items: center; padding: 1px 0 7px; }
.metrics b, .strokes b { color: #2d8ceb; font-weight: 400; margin-right: 2px; }
.dim { color: #555; }
.strokes { display: grid; grid-template-columns: 25px 44px 12px 114px; align-items: center; height: 32px; border-block: 2px solid #303030; }
.strokes > svg:first-child { margin-left: 2px; }
.wide.select { height: 19px; }
.cut { margin-top: 6px; }
.scroll { height: 254px; margin: 0 1px; background: #363636; border-radius: 4px; }

/* Timeline */
.timeline { display: grid; grid-template-columns: 549px minmax(0, 1fr) 19px; flex: 1; margin-left: 2px; background: #232323; min-height: 0; }
.tl-left { display: flex; flex-direction: column; border-right: 1px solid #0c0c0c; }
.tl-tabs { height: 27px; padding-left: 10px; display: flex; color: #b4b4b4; }
.tl-tabs .tab { display: flex; align-items: center; height: 24px; padding-top: 3px; }
.tl-tabs .tab span:nth-child(3) { margin-right: 8px; }
.tc { display: flex; height: 36px; padding: 4px 0 0 10px; }
.tc > div:first-child { width: 96px; }
.tc strong { display: block; margin-left: 5px; font-size: 15px; line-height: 16px; color: #2d8ceb; }
.tc small { display: block; font-size: 10px; line-height: 14px; color: #1f5796; white-space: nowrap; }
.tc-search { width: 60px; height: 20px; margin-top: 4px; padding: 2px 5px; background: #181818; border: 1px solid #303030; color: #b4b4b4; }
.row { height: 17px; flex: none; border-bottom: 1px solid #1e1e1e; }
.tl-head, .layer { display: grid; grid-template-columns: 16px 15px 15px 15px 22px 20px 27px 18px 132px 15px 15px 15px 30px 15px 15px 15px 16px 16px 6px 88px; align-items: center; padding-left: 3px; }
.tl-head { height: 20px; background: #2a2a2a; border-block: 1px solid #0c0c0c; color: #c4c4c4; font-size: 9px; }
.tl-head svg { justify-self: center; }
.tl-head .tag-col { grid-column: 5 / 7; margin-left: 4px; }
.num { white-space: nowrap; }
.layer { background: #303030; }
.layer.sel { background: #484848; }
.layer > svg { justify-self: center; }
.layer > b { width: 12px; height: 12px; }
.layer .c, .eye { display: grid; place-items: center; height: 15px; }
.c { background: #1f1f1f; border: 1px solid #303030; }
.sel .c { background: #3a3a3a; border-color: #484848; }
.name { margin-left: 1px; padding: 0 3px; color: #b4b4b4; white-space: nowrap; }
.boxed-name { width: 128px; margin-left: 0; border: 1px solid #b4b4b4; }
.layer .select, .mode { height: 16px; border-width: 0 1px; }
.layer select { padding-left: 5px; line-height: 14px; }
.layer .select svg { margin-right: 3px; }
.prop { display: flex; align-items: center; padding-left: 3px; background: #262626; }
.eye { width: 16px; flex: none; }
.eye.c { border-color: #262626; }
.twist { width: 14px; margin-left: 68px; display: grid; place-items: center; }
.pname { width: 184px; padding-left: 6px; line-height: 16px; }
.group .twist { margin-left: 84px; }
.group .pname { width: 160px; margin: 0 5px 0 3px; padding-left: 4px; }
.hl { background: #484848; }
.mode { width: 126px; }
.mode select { padding-left: 6px; }
.mode svg { margin-right: 3px; }
.addc { display: flex; gap: 3px; align-items: center; margin-left: 88px; }
.reset { color: #2d8ceb; }
.tl-foot { display: flex; align-items: center; gap: 6px; height: 19px; margin-top: auto; padding: 0 0 2px 5px; border-top: 1px solid #0c0c0c; }
.tl-foot button { width: 134px; height: 16px; margin-left: 225px; border: 1px solid #303030; white-space: nowrap; }

/* One frame is 1/105 of the visible time span */
.scale { --frame: calc(100% / 105); position: relative; margin-left: 7px; }
.scale > * { position: absolute; left: calc(var(--f) * var(--frame)); }
.tl-right { position: relative; display: flex; flex-direction: column; border-left: 1px solid #0c0c0c; }
.tl-gap { height: 32px; }
.ruler { height: 31px; border-top: 1px solid #1a1a1a; }
.ruler span { bottom: 0; height: 20px; transform: translateX(-50%); }
.ruler span::after { content: ""; position: absolute; left: 50%; top: 15px; width: 1px; height: 5px; background: #999; }
.ruler .long::after { height: 10px; }
.nav-end { top: 2px; width: 6px; height: 8px; margin-left: -6px; background: #2d8ceb; border-radius: 0 4px 4px 0; }
.work { height: 15px; }
.work i { height: 15px; width: calc(var(--n) * var(--frame)); background: linear-gradient(#555, #626262); }
.work i::after { content: ""; position: absolute; right: -5px; top: 0; width: 5px; height: 15px; background: #2d8ceb; border-radius: 0 3px 3px 0; }
.cache { height: 5px; border-block: 1px solid #0c0c0c; }
.cache i { top: 0; height: 3px; width: calc(var(--n) * var(--frame)); background: #21ac2c; }
.tracks { flex: 1; display: flex; flex-direction: column; }
.track { height: 17px; flex: none; border-bottom: 1px solid #1e1e1e; background: linear-gradient(90deg, #333 0 77%, #262626 77%); }
.lit { background: linear-gradient(90deg, #3c3c3c 0 77%, #303030 77%); }
.track.sel { background: linear-gradient(90deg, #505050 0 77%, #484848 77%); }
.rest { flex: 1; border: 0; }
.bar { top: 0; height: 16px; width: calc(var(--n) * var(--frame)); }
.bar.indigo { background: #545d90; }
.bar.brick { background: #773a3a; }
.bar.bright { background: linear-gradient(#7f88d6, #475bc8); border-top: 1px solid #b4b8ea; border-left: 1px solid #b4b8ea; }
.bar.dusk { background: #74727f; }
.track u { top: 6px; width: 6px; height: 6px; margin-left: -3px; background: #bdbdbd; border-radius: 50%; }
.track svg { top: 2px; width: 8px; height: 12px; margin-left: -4px; }
.playhead { position: absolute; inset: 47px 0 19px 0; pointer-events: none; }
.playhead svg { top: 0; margin-left: -6px; }
.playhead i { top: 12px; bottom: 0; width: 1px; background: #2d8ceb; }
.zoombar { display: flex; align-items: center; height: 19px; padding: 0 0 2px 5px; background: #1c1c1c; border-top: 1px solid #0c0c0c; }
.zoombar input { appearance: none; width: 44px; height: 11px; margin: 0 11px 0 16px; background: linear-gradient(#3c3c3c, #3c3c3c) 0 5px / 34px 2px no-repeat; }
.zoombar input::-webkit-slider-thumb { appearance: none; width: 10px; height: 10px; border: 2px solid #a2a2a2; border-radius: 50%; background: #1c1c1c; }
.zoombar i { width: 80px; height: 15px; margin-left: 5px; border-radius: 8px; background: #303030; }
.tl-strip { display: flex; flex-direction: column; align-items: center; gap: 6px; padding-top: 65px; }

/* Render dialog */
.dialog { position: absolute; left: 138px; top: 129px; width: 508px; box-shadow: 0 3px 12px rgba(0, 0, 0, .4); }
.dlg-bar { display: flex; justify-content: flex-end; align-items: center; height: 31px; background: #fff; padding: 2px 1px 0 0; }
.dlg-bar button { width: 19px; height: 19px; background: #c35454; color: #fff; font-weight: 700; font-size: 10px; line-height: 17px; }
.dlg-frame { margin: 0 1px; border: 1px solid #2d8ceb; background: #494949; }
.dlg-tab { display: flex; align-items: center; gap: 5px; height: 27px; padding: 0 0 1px 12px; background: #232323; color: #b4b4b4; }
.dlg-body { display: flex; flex-direction: column; padding: 12px 10px 3px; font-family: Roboto, sans-serif; }
.status { display: flex; align-items: center; gap: 8px; padding-left: 7px; color: #fff; font-weight: 700; font-size: 12px; }
.progress { height: 8px; margin: 13px 0 20px; border-radius: 4px; background: #333; }
.progress i { display: block; height: 8px; border-radius: 4px; background: linear-gradient(90deg, #2a97a3, #2db457 80%); }
.render { background: #000; }
.render-head { display: flex; align-items: center; gap: 8px; height: 33px; padding: 0 24px 0 4px; background: #333434; color: #fff; font-weight: 700; font-size: 12px; }
.render-head span { flex: 1; }
.render-list { height: 107px; }
.cancel { align-self: center; width: 80px; height: 30px; margin-top: 20px; border-radius: 3px; background: #65a9da; color: #fff; font-weight: 700; font-size: 12px; }
.version { margin-top: 23px; font-size: 10px; line-height: 14px; text-align: right; }
```
